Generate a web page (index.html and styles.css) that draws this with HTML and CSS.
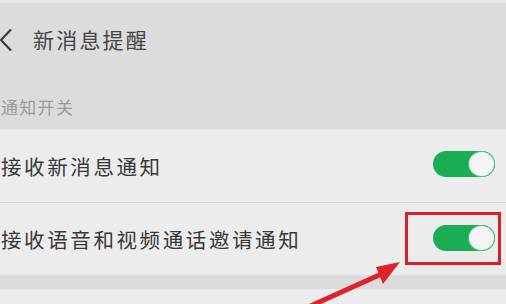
FILE: index.html
```html
<!DOCTYPE html>
<html lang="zh-CN">
<head>
<meta charset="utf-8">
<title>新消息提醒</title>
<link rel="stylesheet" href="styles.css">
</head>
<body>
<div class="screen">
  <header class="topbar">
    <svg class="back" width="12" height="22" viewBox="0 0 12 22"><polyline points="10.5,1 1,11 10.5,21" fill="none" stroke="#3c3c3c" stroke-width="2.2" stroke-linecap="round" stroke-linejoin="round"/></svg>
    <h1 class="title">新消息提醒</h1>
  </header>
  <div class="section-label">通知开关</div>
  <div class="list">
    <div class="row first">
      <span class="row-text">接收新消息通知</span>
      <span class="toggle"><span class="knob"></span></span>
    </div>
    <div class="row second">
      <span class="row-text">接收语音和视频通话邀请通知</span>
      <span class="toggle-wrap"><span class="toggle"><span class="knob"></span></span></span>
    </div>
  </div>
  <div class="gap"></div>
  <div class="bottom"></div>
  <svg class="arrow" width="506" height="304" viewBox="0 0 506 304">
    <line x1="306" y1="308" x2="386" y2="272" stroke="#e0202a" stroke-width="5"/>
    <polygon points="400,262 376,267 383,284" fill="#e0202a"/>
  </svg>
</div>
</body>
</html>
```

FILE: styles.css
```css
html, body {
  margin: 0;
  padding: 0;
}
body {
  background: #ececec;
  font-family: "Noto Sans CJK SC", "Noto Sans", sans-serif;
}
.screen {
  position: relative;
  width: 506px;
  height: 304px;
  overflow: hidden;
  background: #ececec;
}
.topbar {
  height: 73px;
  border-top: 3px solid #e8e8e8;
  background: #dcdcdc;
  display: flex;
  align-items: center;
}
.back {
  margin-top: 0;
  flex: none;
}
.title {
  margin: 0 0 0 21px;
  font-size: 21px;
  font-weight: 400;
  letter-spacing: 2.2px;
  color: #454545;
  line-height: 24px;
  margin-top: -2px;
}
.section-label {
  height: 53px;
  background: #dcdcdc;
  box-sizing: border-box;
  padding-top: 19px;
  padding-left: 1px;
  font-size: 17px;
  line-height: 24px;
  letter-spacing: 1.3px;
  color: #999;
}
.list {
  background: #ececec;
}
.row {
  display: flex;
  align-items: center;
  justify-content: space-between;
  padding-left: 1px;
  padding-right: 11px;
}
.row.first {
  height: 73px;
  border-bottom: 1px solid #d9d9d9;
}
.row.second {
  height: 72px;
}
.row.first .toggle {
  margin-top: -4px;
}
.row-text {
  font-size: 20.5px;
  letter-spacing: 2.6px;
  color: #383838;
  line-height: 24px;
}
.toggle {
  display: flex;
  justify-content: flex-end;
  align-items: center;
  width: 62px;
  height: 26px;
  border-radius: 13px;
  background: #1aad56;
  box-sizing: border-box;
  padding: 1px;
}
.knob {
  width: 25px;
  height: 24px;
  border-radius: 50%;
  background: #f4f4f4;
  box-shadow: 0 0 0 1px #4cc47c;
}
.toggle-wrap {
  display: flex;
  align-items: center;
  justify-content: flex-end;
  width: 96px;
  height: 53px;
  border: 3px solid #d82029;
  margin-right: -6px;
  margin-top: -2px;
  padding-right: 3px;
  box-sizing: border-box;
}
.gap {
  height: 14px;
  background: #dcdcdc;
}
.bottom {
  height: 20px;
  background: #ececec;
}
.arrow {
  position: absolute;
  left: 0;
  top: 0;
  pointer-events: none;
}
```
